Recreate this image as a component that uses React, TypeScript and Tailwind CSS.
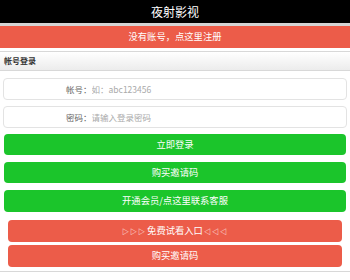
import React from "react";

const font = { fontFamily: '"Noto Sans CJK SC", "Noto Sans", sans-serif' };

function Field({ label, placeholder }: { label: string; placeholder: string }) {
  return (
    <div className="mx-[3px] flex h-[22px] items-center rounded-[4px] border border-[#e3e3e3] bg-white pl-[62px] text-[8.5px]">
      <span className="text-[#666]">{label}</span>
      <input
        className="w-[200px] bg-transparent text-[#999] outline-none placeholder:text-[#aaa]"
        placeholder={placeholder}
        style={font}
      />
    </div>
  );
}

export default function App() {
  return (
    <div className="w-[350px] h-[280px] overflow-hidden bg-white" style={font}>
      {/* top bar */}
      <div className="flex h-[23px] items-center justify-center bg-black text-[12px] text-white">
        夜射影视
      </div>
      <div className="h-[3px] bg-[#d4d4d4]" />
      <div className="flex h-[22px] items-center justify-center bg-[#ec5c49] text-[9.3px] text-white">
        没有账号，点这里注册
      </div>

      {/* login block */}
      <div className="mt-[3px] flex h-[20px] items-center border-y border-[#d8d8d8] bg-gradient-to-b from-white to-[#ececec] pl-[4px] text-[8px] font-bold text-[#333]">
        帐号登录
      </div>

      <div className="mt-[7px] flex flex-col gap-[6px]">
        <Field label="帐号：" placeholder="如：abc123456" />
        <Field label="密码：" placeholder="请输入登录密码" />
      </div>

      <div className="mx-[4px] mt-[6px] flex flex-col gap-[7px] text-[9.3px] text-white">
        <div className="flex h-[21px] items-center justify-center rounded-[4px] bg-[#1bc52b]">立即登录</div>
        <div className="flex h-[21px] items-center justify-center rounded-[4px] bg-[#1bc52b]">购买邀请码</div>
        <div className="flex h-[22px] items-center justify-center rounded-[4px] bg-[#1bc52b]">开通会员/点这里联系客服</div>
      </div>

      <div className="mx-[8px] mt-[8px] flex flex-col gap-[3px] text-[9.3px] text-white">
        <div className="flex h-[22px] items-center justify-center rounded-[4px] bg-[#ec5c49]">
          <span className="mr-[1px] text-[7px] tracking-[1px]">▷▷▷</span>
          免费试看入口
          <span className="ml-[1px] text-[7px] tracking-[1px]">◁◁◁</span>
        </div>
        <div className="flex h-[22px] items-center justify-center rounded-[4px] bg-[#ec5c49]">购买邀请码</div>
      </div>

      <div className="mt-[4px] border-t border-[#d8d8d8]" />
    </div>
  );
}
